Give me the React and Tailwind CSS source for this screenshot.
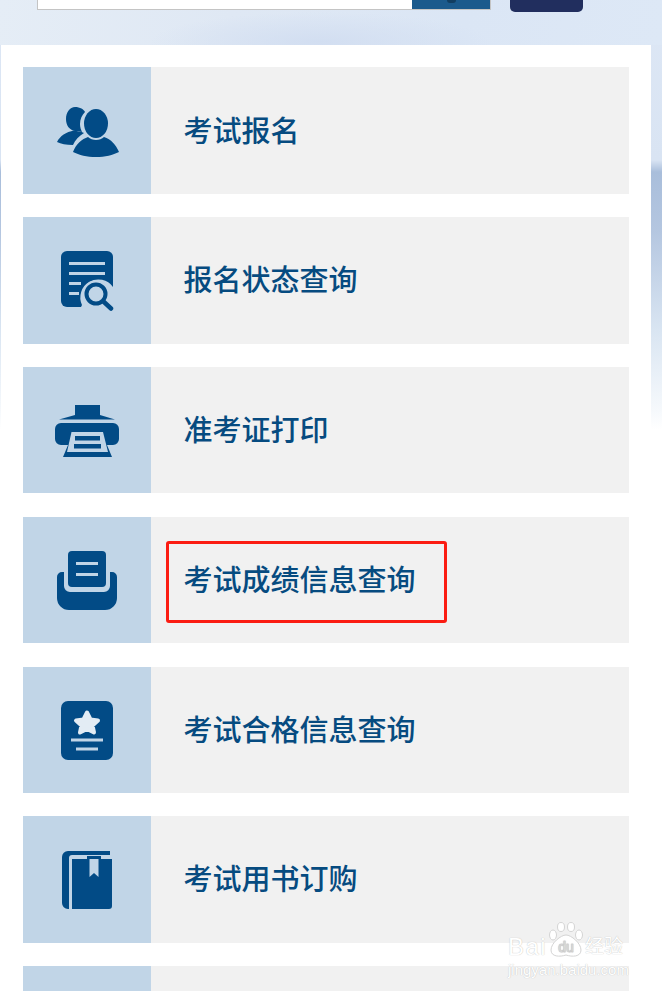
const NAVY = "#024b86";
const TILE = "#c1d5e7";

function PeopleIcon() {
  return (
    <svg width="63" height="50" viewBox="0 0 63 50" fill={NAVY}>
      <path d="M19 0c5 0 9 2.500 10 5-3 3-5 7-5 12 0 3 1 6 2 8-2-.5-4-1-7-1-6-1-9-6-9-12C10 5 14 0 19 0z" />
      <path d="M1 35c3-6 9-10 17-11.500 3 .5 7 1 10 2.500-5 3-9 7-11 12C10 38 5 37 1 35z" />
      <ellipse cx="40" cy="16.500" rx="12" ry="14.500" />
      <path d="M17 45c3-8 9-13 15-15 2 2 5 3 8 3s6-1 8-3c7 2 12 8 15 15-6 3-14 5-23 5s-17-2-23-5z" />
    </svg>
  );
}

function SearchDocIcon() {
  return (
    <svg width="53" height="60" viewBox="0 0 53 60">
      <path fill={NAVY} d="M6 0h40a6 6 0 0 1 6 6v50H6a6 6 0 0 1-6-6V6a6 6 0 0 1 6-6z" />
      <path fill={TILE} d="M52 36v24H18l3-6a18 18 0 0 1 31-18z" />
      <path stroke={TILE} strokeWidth="3" d="M8 12.500h36M8 22.500h36M8 32.500h12M8 42.500h10" fill="none" />
      <circle cx="35" cy="43" r="13.500" fill={TILE} />
      <circle cx="35" cy="43" r="9.500" fill="none" stroke={NAVY} strokeWidth="4" />
      <path stroke={NAVY} strokeWidth="4.500" strokeLinecap="round" d="M43 51l7 6.500" />
    </svg>
  );
}

function PrinterIcon() {
  return (
    <svg width="64" height="53" viewBox="0 0 64 53">
      <path fill={NAVY} d="M20 0h25v10l15 4.500H4L20 10z" />
      <path fill={NAVY} d="M6 18h52a6 6 0 0 1 6 6v10a6 6 0 0 1-6 6h-6l5 12H8l5-12H6a6 6 0 0 1-6-6V24a6 6 0 0 1 6-6z" />
      <path fill={TILE} d="M16.500 27h31.500l5 20H12z" />
      <path fill={NAVY} d="M20 31h25v4.500H20zM19 39h27v4.500H19z" />
    </svg>
  );
}

function TrayIcon() {
  return (
    <svg width="60" height="59" viewBox="0 0 60 59">
      <rect x="11" y="0" width="38" height="36" rx="4" fill={NAVY} />
      <path fill={NAVY} d="M0 26a5 5 0 0 1 5-5h2v14a6 6 0 0 0 6 6h34a6 6 0 0 0 6-6V21h2a5 5 0 0 1 5 5v21a12 12 0 0 1-12 12H12A12 12 0 0 1 0 47z" />
      <path stroke={TILE} strokeWidth="3" d="M19 12.500h22M19 23.500h22" />
    </svg>
  );
}

function BadgeIcon() {
  return (
    <svg width="52" height="59" viewBox="0 0 52 59">
      <rect width="52" height="59" rx="7" fill={NAVY} />
      <path fill="#e3ecf4" stroke="#e3ecf4" strokeWidth="4" strokeLinejoin="round" d="M26 11.500l3.500 7 7.500 1-5.500 5 1.500 7-7-3.500-7 3.500 1.500-7-5.500-5 7.500-1z" />
      <path stroke={TILE} strokeWidth="3" d="M10 39h32M15 48h22" />
    </svg>
  );
}

function BookIcon() {
  return (
    <svg width="50" height="58" viewBox="0 0 50 58">
      <path fill={NAVY} d="M6 0h42v4H10a3 3 0 0 0-3 3v51H6a6 6 0 0 1-6-6V6a6 6 0 0 1 6-6z" />
      <path fill={NAVY} d="M10 8h15V5h14v3h11v47a3 3 0 0 1-3 3H10z" />
      <path fill={TILE} d="M27.500 8h9v18l-4.500-4-4.500 4z" />
    </svg>
  );
}

const rows = [
  ["考试报名", <PeopleIcon />],
  ["报名状态查询", <SearchDocIcon />],
  ["准考证打印", <PrinterIcon />],
  ["考试成绩信息查询", <TrayIcon />],
  ["考试合格信息查询", <BadgeIcon />],
  ["考试用书订购", <BookIcon />],
  ["", null],
];

function Row({ label, icon, marked }) {
  return (
    <div className="flex h-[126.4px] shrink-0 bg-[#f1f1f1]">
      <div className="flex w-[128px] shrink-0 items-center justify-center bg-[#c1d5e7] pt-[2px]">{icon}</div>
      <div className="relative flex flex-1 items-center pb-[3px] pl-[33px]">
        <span className="-ml-[0.500px] text-[29px] font-medium leading-none text-[#064b80]">{label}</span>
        {marked && (
          <div className="absolute left-[15px] top-[24px] h-[82px] w-[281px] rounded-[3px] border-[3px] border-[#fb1c12]" />
        )}
      </div>
    </div>
  );
}

function Watermark() {
  return (
    <div
      className="absolute left-[508px] top-[921px] flex flex-col items-start text-white [text-shadow:0_0_1px_#b0b0b0]"
      style={{ fontFamily: '"Liberation Sans", "Noto Sans CJK SC", sans-serif' }}
    >
      <div className="flex h-[36px] items-end">
        <span className="w-[40px] text-[24px] leading-[20px] tracking-[1.500px]">Bai</span>
        <svg width="36" height="35" viewBox="0 0 36 35" fill="#ffffff" stroke="#d4d4d4" strokeWidth="1">
          <ellipse cx="5" cy="13" rx="3.500" ry="5" />
          <ellipse cx="13" cy="5" rx="3.500" ry="4.500" />
          <ellipse cx="23" cy="5" rx="3.500" ry="4.500" />
          <ellipse cx="31" cy="13" rx="3.500" ry="5" />
          <path d="M18 13c5 0 15 8 15 15 0 7-9 7-15 5-6 2-15 2-15-5 0-7 10-15 15-15z" />
          <text x="18" y="30" textAnchor="middle" fontSize="14" fill="#ffffff" stroke="#cfcfcf" strokeWidth="0.500">du</text>
        </svg>
        <span className="ml-[1px] text-[19px] leading-[20px]">经验</span>
      </div>
      <span className="mt-[6px] text-[15px] leading-[14px]">jingyan.baidu.com</span>
    </div>
  );
}

export default function App() {
  return (
    <div
      className="relative h-[991px] w-[662px] overflow-hidden bg-[linear-gradient(180deg,#dde7f5_0,#d9e4f3_160px,#a9bedb_172px,#b4c6e0_230px,#d9e5f2_330px,#f6f9fc_411px,#ffffff_430px)]"
      style={{ fontFamily: '"Noto Sans CJK SC", "Liberation Sans", sans-serif' }}
    >
      <div className="flex h-[45px] items-start bg-[radial-gradient(ellipse_170px_30px_at_320px_42px,#d2def1_0%,transparent_100%),linear-gradient(100deg,#e5edf6_0%,#dfe8f4_35%,#dbe6f5_70%,#dde8f6_100%)] pl-[37px]">
        <div className="flex h-[10px] w-[454px] border-x border-b border-[#c4c4c4] bg-white">
          <div className="relative ml-auto flex h-[9px] w-[78px] justify-center bg-[#1b5a8c]">
            <div className="h-[3px] w-[9px] rounded-b-[4px] bg-[#123e61]" />
          </div>
        </div>
        <div className="ml-[19px] h-[12px] w-[73px] rounded-b-[5px] bg-[#212e5e]" />
      </div>
      <div className="ml-[1px] flex h-[946px] w-[650px] flex-col gap-[23.400px] overflow-hidden bg-white pl-[22px] pr-[22px] pt-[22.400px]">
        {rows.map(([label, icon], i) => (
          <Row key={i} label={label} icon={icon} marked={i === 3} />
        ))}
      </div>
      <Watermark />
    </div>
  );
}
